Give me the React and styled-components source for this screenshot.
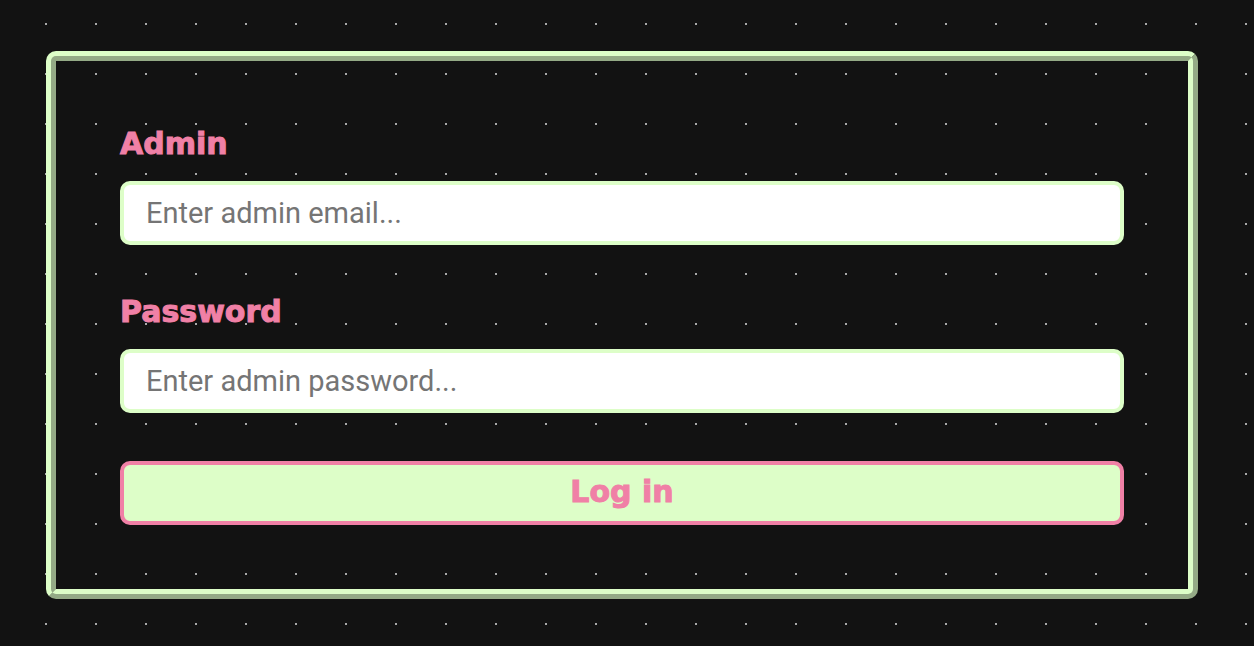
import React from "react";
import styled, { createGlobalStyle, css } from "styled-components";

const mint = "#ddfec8";
const pink = "#f080a6";
const ink = "#121212";

const GlobalStyle = createGlobalStyle`
  *, *::before, *::after { box-sizing: border-box; }
  body {
    margin: 0;
    font-family: Roboto, "Liberation Sans", sans-serif;
    background-color: ${ink};
    background-image: radial-gradient(circle at 1px 1px, #aaaaaa 1px, transparent 1px);
    background-size: 50px 50px;
    background-position: -5px 23px;
  }
`;

const displayText = css`
  color: ${pink};
  font-family: "DejaVu Sans", Inter, sans-serif;
  font-size: 30px;
  font-weight: 700;
  line-height: 38px;
  -webkit-text-stroke: 1px ${pink};
`;

const Page = styled.main`
  padding: 51px 56px 47px 46px;
`;

const LoginForm = styled.form`
  display: flex;
  flex-direction: column;
  gap: 48px;
  padding: 64px;
  border: 10px ridge ${mint};
  border-radius: 10px;
`;

const Field = styled.div`
  display: flex;
  flex-direction: column;
  gap: 18px;
`;

const Label = styled.label`
  ${displayText}
`;

const TextInput = styled.input`
  width: 100%;
  height: 64px;
  padding: 0 22px;
  border: 4px solid ${mint};
  border-radius: 10px;
  background: #ffffff;
  color: ${ink};
  font-family: inherit;
  font-size: 29px;

  &::placeholder {
    color: #757575;
    opacity: 1;
  }
`;

const SubmitButton = styled.button`
  ${displayText}
  height: 64px;
  padding: 0 24px 2px;
  border: 4px solid ${pink};
  border-radius: 10px;
  background: ${mint};
  cursor: pointer;
`;

export default function App() {
  return (
    <>
      <GlobalStyle />
      <Page>
        <LoginForm onSubmit={(event) => event.preventDefault()}>
          <Field>
            <Label htmlFor="email">Admin</Label>
            <TextInput id="email" type="email" placeholder="Enter admin email..." />
          </Field>
          <Field>
            <Label htmlFor="password">Password</Label>
            <TextInput id="password" type="password" placeholder="Enter admin password..." />
          </Field>
          <SubmitButton type="submit">Log in</SubmitButton>
        </LoginForm>
      </Page>
    </>
  );
}
